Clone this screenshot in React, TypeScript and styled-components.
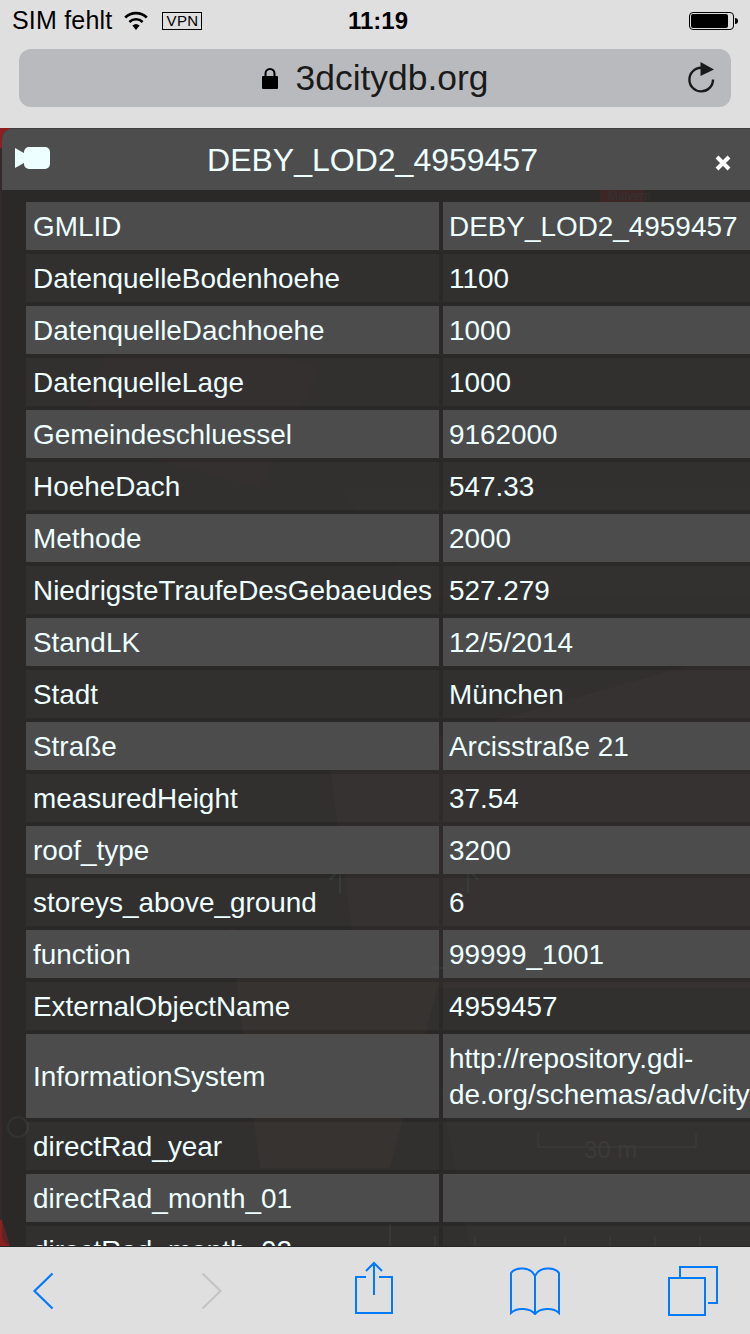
import React from 'react';
import styled, { createGlobalStyle } from 'styled-components';

const GlobalStyle = createGlobalStyle`
  * {
    margin: 0;
    padding: 0;
    box-sizing: border-box;
  }

  body {
    font-family: 'Liberation Sans', Arial, sans-serif;
    background: #dfdfdf;
    color: #000;
  }
`;

const Phone = styled.div`
  width: 750px;
  height: 1334px;
  display: flex;
  flex-direction: column;
  overflow: hidden;
  background: #dfdfdf;
`;

const BrowserBar = styled.header`
  height: 128px;
  flex: none;
  padding: 0 19px;
  display: flex;
  flex-direction: column;
  background: #dfdfdf;
`;

const StatusBar = styled.div`
  height: 49px;
  flex: none;
  margin: 0 -8px 0 -7px;
  padding-bottom: 8px;
  display: grid;
  grid-template-columns: 1fr auto 1fr;
  align-items: center;
  font-size: 25px;
`;

const StatusLeft = styled.div`
  display: flex;
  align-items: center;
  gap: 12px;
  letter-spacing: 0.2px;
`;

const VpnBadge = styled.span`
  width: 40px;
  height: 18px;
  margin-left: 2px;
  border: 1px solid #000;
  display: flex;
  align-items: center;
  justify-content: center;
  font-size: 15px;
  letter-spacing: 0.3px;
`;

const Clock = styled.div`
  font-weight: 700;
  font-size: 24px;
  padding-left: 5px;
`;

const StatusRight = styled.div`
  display: flex;
  justify-content: flex-end;
`;

const AddressBar = styled.div`
  height: 58px;
  flex: none;
  border-radius: 12px;
  background: #b9babd;
  position: relative;
  display: flex;
  align-items: center;
  justify-content: center;
  gap: 18px;
  font-size: 35.4px;
  color: #1a1a1a;
`;

const ReloadButton = styled.span`
  position: absolute;
  right: 16px;
  top: 13px;
  display: flex;
`;

const Viewport = styled.main`
  flex: 1;
  min-height: 0;
  position: relative;
  overflow: hidden;
  background: #2a2827;
`;

const MapLayer = styled.svg`
  position: absolute;
  inset: 0;
  width: 100%;
  height: 100%;
`;

const Panel = styled.section`
  position: relative;
  height: 100%;
  margin-left: 2px;
  border-top-left-radius: 12px;
  border-bottom-left-radius: 10px;
  display: flex;
  flex-direction: column;
  overflow: hidden;
  background: rgba(44, 43, 42, 0.45);
`;

const PanelHeader = styled.div`
  height: 62px;
  flex: none;
  position: relative;
  display: flex;
  align-items: center;
  justify-content: center;
  background: #4d4d4d;
  border-top: 1px solid #3e3e3e;
  color: #edffff;
  font-size: 32px;
  padding: 2px 7px 0 0;
`;

const CameraIcon = styled.svg`
  position: absolute;
  left: 13px;
  top: 18px;
`;

const CloseIcon = styled.svg`
  position: absolute;
  right: 19px;
  top: 26px;
`;

const AttributeTable = styled.div`
  flex: 1;
  min-height: 0;
  padding: 12px 0 0 24px;
  display: grid;
  grid-template-columns: 413px 320px;
  grid-auto-rows: min-content;
  gap: 4px;
  overflow: hidden;
  color: #edffff;
  font-size: 27.9px;
`;

const Cell = styled.div<{ $odd: boolean; $value?: boolean; $tall?: boolean }>`
  height: ${props => (props.$tall ? '84px' : '48px')};
  padding: ${props => (props.$value ? '1px 6px 0' : '1px 7px 0')};
  display: flex;
  align-items: center;
  background: ${props => (props.$odd ? 'rgba(80, 80, 80, 0.9)' : 'rgba(255, 255, 255, 0.035)')};
  line-height: 36px;
  overflow: hidden;
`;

const WrappedValue = styled.span`
  display: block;
  white-space: nowrap;
`;

const Toolbar = styled.footer`
  height: 88px;
  flex: none;
  display: grid;
  grid-template-columns: 86px 252px 72px 250px 66px;
  align-items: center;
  justify-items: center;
  background: #dfdfdf;
  border-top: 1px solid #262626;
`;

const ToolIcon = styled.svg<{ $lift?: number }>`
  display: block;
  margin-bottom: ${props => props.$lift ?? 0}px;
`;

const rows: [string, string][] = [
  ['GMLID', 'DEBY_LOD2_4959457'],
  ['DatenquelleBodenhoehe', '1100'],
  ['DatenquelleDachhoehe', '1000'],
  ['DatenquelleLage', '1000'],
  ['Gemeindeschluessel', '9162000'],
  ['HoeheDach', '547.33'],
  ['Methode', '2000'],
  ['NiedrigsteTraufeDesGebaeudes', '527.279'],
  ['StandLK', '12/5/2014'],
  ['Stadt', 'München'],
  ['Straße', 'Arcisstraße 21'],
  ['measuredHeight', '37.54'],
  ['roof_type', '3200'],
  ['storeys_above_ground', '6'],
  ['function', '99999_1001'],
  ['ExternalObjectName', '4959457'],
  ['InformationSystem', ''],
  ['directRad_year', ''],
  ['directRad_month_01', ''],
  ['directRad_month_02', ''],
];

const App: React.FC = () => {
  return (
    <Phone>
      <GlobalStyle />
      <BrowserBar>
        <StatusBar>
          <StatusLeft>
            <span>SIM fehlt</span>
            <svg width="24" height="20" viewBox="0 0 24 20">
              <path d="M1.2 6.5a15.5 15.5 0 0 1 21.6 0" fill="none" stroke="#000" strokeWidth="2.6" />
              <path d="M5.4 11a9.4 9.4 0 0 1 13.2 0" fill="none" stroke="#000" strokeWidth="2.6" />
              <path d="M8.4 14.6a5.6 5.6 0 0 1 7.2 0L12 19z" fill="#000" />
            </svg>
            <VpnBadge>VPN</VpnBadge>
          </StatusLeft>
          <Clock>11:19</Clock>
          <StatusRight>
            <svg width="50" height="20" viewBox="0 0 50 20">
              <rect x="0.5" y="1.5" width="44" height="17" rx="3.5" fill="none" stroke="#000" />
              <rect x="2" y="3" width="37" height="14" rx="2" fill="#000" />
              <path d="M46 7c2 0 3 1 3 3s-1 3-3 3z" fill="#000" />
            </svg>
          </StatusRight>
        </StatusBar>
        <AddressBar>
          <svg width="16" height="22" viewBox="0 0 16 22">
            <path d="M3.5 10V6.5a4.5 4.5 0 0 1 9 0V10" fill="none" stroke="#000" strokeWidth="2" />
            <rect x="0" y="9" width="16" height="13" rx="1" fill="#000" />
          </svg>
          <span>3dcitydb.org</span>
          <ReloadButton>
            <svg width="27" height="31" viewBox="0 0 27 31">
              <path d="M25 17.5A11.8 11.8 0 1 1 13.2 5.8" fill="none" stroke="#1a1a1a" strokeWidth="2.4" />
              <path d="M12.5 0L26 7.5 12.5 14z" fill="#1a1a1a" />
            </svg>
          </ReloadButton>
        </AddressBar>
      </BrowserBar>

      <Viewport>
        {/* faint map scene behind the translucent panel */}
        <MapLayer viewBox="0 0 750 1118" preserveAspectRatio="none">
          <rect width="750" height="1118" fill="#2a2827" />
          <path d="M0 0h16L4 8 2 20H0z" fill="#8c1f1f" />
          <rect y="20" width="2" height="1098" fill="#332b2b" />
          <path d="M0 1092h2l8 26H0z" fill="#8c1f1f" />
          <path d="M600 60h44v14h-44z" fill="#4a2424" />
          <path d="M120 180l200 60-60 120-180-50z" fill="#2f2929" />
          <path d="M340 360h410v110H420z" fill="#2d2a29" />
          <path d="M330 640l420-120v340H360z" fill="#322d2a" />
          <path d="M230 800l210 50-50 190H260z" fill="#332e2b" />
          <path d="M440 960h310v158H470z" fill="#2d2c2b" />
          <path d="M340 765v-25l-10 12M468 765v-25l10 12M340 840h60M468 840h-40" fill="none" stroke="#304238" strokeWidth="2" />
          <circle cx="18" cy="999" r="10" fill="none" stroke="#3a3a3a" strokeWidth="2" />
          <path d="M538 1005v14h158v-14" fill="none" stroke="#3a3f44" strokeWidth="1" />
          <text x="584" y="1030" fontSize="24" fill="#3e3b38" fontFamily="Liberation Sans, sans-serif">30 m</text>
          <text x="608" y="72" fontSize="12" fill="#3a3a3a" fontFamily="Liberation Sans, sans-serif">Malvern</text>
          <path d="M390 1096v22M435 1108v10M475 1108v10M565 1108v10M610 1108v10M655 1108v10M700 1108v10" fill="none" stroke="#454545" strokeWidth="1" />
        </MapLayer>
        <Panel>
          <PanelHeader>
            <CameraIcon width="35" height="22" viewBox="0 0 35 22">
              <path d="M0 1l9 5V5a5 5 0 0 1 5-5h16a5 5 0 0 1 5 5v12a5 5 0 0 1-5 5H14a5 5 0 0 1-5-5v-1l-9 5z" fill="#edffff" />
            </CameraIcon>
            DEBY_LOD2_4959457
            <CloseIcon width="16" height="16" viewBox="0 0 16 16">
              <path d="M2 2l12 12M14 2L2 14" stroke="#fff" strokeWidth="4" />
            </CloseIcon>
          </PanelHeader>
          <AttributeTable>
            {rows.map(([name, value], index) => {
              const tall = name === 'InformationSystem';
              return (
                <React.Fragment key={name}>
                  <Cell $odd={index % 2 === 0} $tall={tall}>{name}</Cell>
                  <Cell $odd={index % 2 === 0} $tall={tall} $value>
                    {tall ? (
                      <WrappedValue>
                        http://repository.gdi-
                        <br />
                        de.org/schemas/adv/city
                      </WrappedValue>
                    ) : (
                      value
                    )}
                  </Cell>
                </React.Fragment>
              );
            })}
          </AttributeTable>
        </Panel>
      </Viewport>

      <Toolbar>
        <ToolIcon width="22" height="38" viewBox="0 0 22 38">
          <path d="M20.5 1.5L2.5 19l18 17.5" fill="none" stroke="#007aff" strokeWidth="2.2" />
        </ToolIcon>
        <ToolIcon width="22" height="38" viewBox="0 0 22 38">
          <path d="M1.5 1.5L19.5 19l-18 17.5" fill="none" stroke="#c4c4c4" strokeWidth="2.2" />
        </ToolIcon>
        <ToolIcon $lift={6} width="38" height="53" viewBox="0 0 38 53">
          <path d="M11 16H1v36h36V16H24M19 34V2M11 10l8-8 8 8" fill="none" stroke="#007aff" strokeWidth="2" />
        </ToolIcon>
        <ToolIcon width="50" height="48" viewBox="0 0 50 48">
          <path d="M25 9C21 0 6-1 1 6v40c6-6 19-5 24 1 5-6 18-7 24-1V6c-5-7-20-6-24 3zM25 9v38" fill="none" stroke="#007aff" strokeWidth="2" />
        </ToolIcon>
        <ToolIcon width="50" height="50" viewBox="0 0 50 50">
          <path d="M12 11V1h37v36h-9" fill="none" stroke="#007aff" strokeWidth="2" />
          <rect x="1" y="12" width="36" height="37" fill="none" stroke="#007aff" strokeWidth="2" />
        </ToolIcon>
      </Toolbar>
    </Phone>
  );
};

export default App;
